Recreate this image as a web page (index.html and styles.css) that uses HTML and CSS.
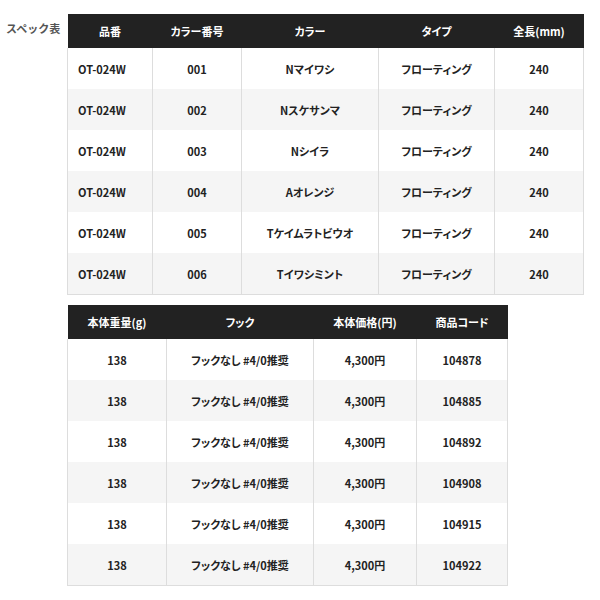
FILE: index.html
```html
<!DOCTYPE html>
<html lang="ja">
<head>
<meta charset="utf-8">
<link rel="stylesheet" href="styles.css">
</head>
<body>
<div class="spec">
  <div class="spec-label">スペック表</div>
  <div class="spec-tables">
    <table class="spec-table t1">
      <colgroup><col class="c85"><col class="c89"><col class="c137"><col class="c116"><col class="c88"></colgroup>
      <thead><tr><th>品番</th><th>カラー番号</th><th>カラー</th><th>タイプ</th><th>全長(mm)</th></tr></thead>
      <tbody>
        <tr><td class="code">OT-024W</td><td>001</td><td>Nマイワシ</td><td>フローティング</td><td>240</td></tr>
        <tr><td class="code">OT-024W</td><td>002</td><td>Nスケサンマ</td><td>フローティング</td><td>240</td></tr>
        <tr><td class="code">OT-024W</td><td>003</td><td>Nシイラ</td><td>フローティング</td><td>240</td></tr>
        <tr><td class="code">OT-024W</td><td>004</td><td>Aオレンジ</td><td>フローティング</td><td>240</td></tr>
        <tr><td class="code">OT-024W</td><td>005</td><td>Tケイムラトビウオ</td><td>フローティング</td><td>240</td></tr>
        <tr><td class="code">OT-024W</td><td>006</td><td>Tイワシミント</td><td>フローティング</td><td>240</td></tr>
      </tbody>
    </table>
    <table class="spec-table t2">
      <colgroup><col class="c99"><col class="c147"><col class="c103"><col class="c90"></colgroup>
      <thead><tr><th>本体重量(g)</th><th>フック</th><th>本体価格(円)</th><th>商品コード</th></tr></thead>
      <tbody>
        <tr><td>138</td><td>フックなし #4/0推奨</td><td>4,300円</td><td>104878</td></tr>
        <tr><td>138</td><td>フックなし #4/0推奨</td><td>4,300円</td><td>104885</td></tr>
        <tr><td>138</td><td>フックなし #4/0推奨</td><td>4,300円</td><td>104892</td></tr>
        <tr><td>138</td><td>フックなし #4/0推奨</td><td>4,300円</td><td>104908</td></tr>
        <tr><td>138</td><td>フックなし #4/0推奨</td><td>4,300円</td><td>104915</td></tr>
        <tr><td>138</td><td>フックなし #4/0推奨</td><td>4,300円</td><td>104922</td></tr>
      </tbody>
    </table>
  </div>
</div>
</body>
</html>
```

FILE: styles.css
```css
html, body {
  margin: 0;
  padding: 0;
  background: #fff;
}
body {
  font-family: "Noto Sans CJK JP", "Noto Sans", sans-serif;
  color: #222;
}
.spec {
  display: flex;
  align-items: flex-start;
  padding-top: 14px;
}
.spec-label {
  width: 62px;
  padding-left: 6px;
  box-sizing: border-box;
  white-space: nowrap;
  font-size: 11px;
  font-weight: bold;
  color: #555;
  line-height: 16px;
  padding-top: 6px;
}
.spec-tables {
  margin-left: 5px;
  display: flex;
  flex-direction: column;
  gap: 10px;
}
.spec-table {
  border-collapse: collapse;
  table-layout: fixed;
  font-size: 11px;
  font-weight: bold;
  font-feature-settings: "palt";
}
.t1 { width: 516px; }
.t2 { width: 440px; }
.c85 { width: 85px; }
.c89 { width: 89px; }
.c137 { width: 137px; }
.c116 { width: 116px; }
.c88 { width: 89px; }
.c99 { width: 99px; }
.c147 { width: 147px; }
.c103 { width: 103px; }
.c90 { width: 91px; }
.spec-table th {
  background: #222;
  color: #fff;
  height: 34px;
  padding: 0;
  text-align: center;
  font-weight: bold;
}
.spec-table td {
  padding: 0;
  text-align: center;
  border: 1px solid #ddd;
  border-top: none;
  border-bottom: none;
  height: 41px;
}
.spec-table td.code {
  padding-right: 16px;
}
.spec-table tbody tr:nth-child(even) td {
  background: #f5f5f5;
}
.spec-table tbody tr:last-child td {
  border-bottom: 1px solid #ddd;
}
```
